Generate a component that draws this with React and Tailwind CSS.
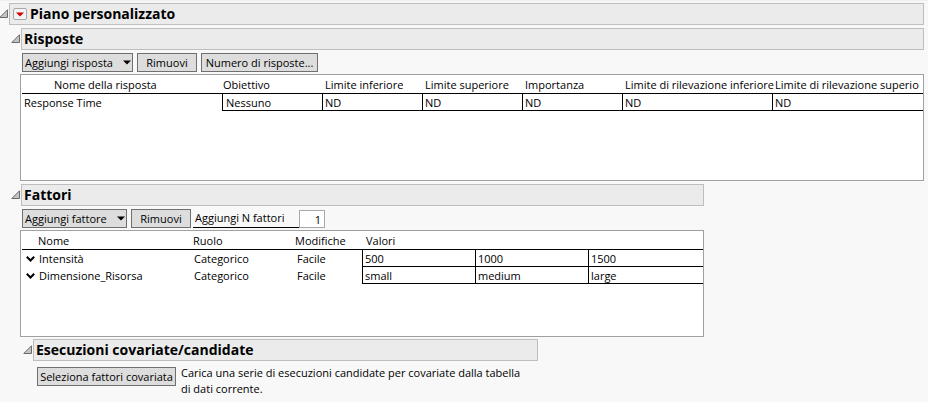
import React from "react";

const responseColumns = [
  { label: "Limite inferiore", width: "w-[100px]" },
  { label: "Limite superiore", width: "w-[100px]" },
  { label: "Importanza", width: "w-[100px]" },
  { label: "Limite di rilevazione inferiore", width: "w-[150px]" },
  { label: "Limite di rilevazione superio", width: "w-auto" },
];

const factors = [
  { name: "Intensità", role: "Categorico", changes: "Facile", values: ["500", "1000", "1500"] },
  { name: "Dimensione_Risorsa", role: "Categorico", changes: "Facile", values: ["small", "medium", "large"] },
];

function Disclosure({ label }) {
  return (
    <button type="button" aria-label={label} aria-expanded="true" className="flex w-3 shrink-0 items-center justify-end">
      <svg width="10" height="10" viewBox="0 0 10 10" aria-hidden="true">
        <path d="M8.5 0.8V8.5H0.8Z" fill="#c4c4c4" stroke="#6a6a6a" strokeWidth="1" />
      </svg>
    </button>
  );
}

function Outline({ title, level: Heading, menu, className }) {
  return (
    <div className={`flex h-[22px] ${className}`}>
      <Disclosure label={title} />
      <div className="flex min-w-0 grow items-center border border-[#bebebe] bg-[#ebebeb] pl-[2px]">
        {menu && (
          <button type="button" aria-label="Menu" className="mx-px mr-[3px] flex h-3 w-[14px] items-center justify-center rounded-[2px] border border-[#a8a8a8] bg-[#f3f3f3]">
            <svg width="8" height="5" viewBox="0 0 8 5" aria-hidden="true">
              <path d="M0 0.5H8L4 4.5Z" fill="#d00000" />
            </svg>
          </button>
        )}
        <Heading className="text-[14px] leading-5 font-bold whitespace-nowrap">{title}</Heading>
      </div>
    </div>
  );
}

function Button({ children, menu, className }) {
  return (
    <button
      type="button"
      aria-haspopup={menu ? "menu" : undefined}
      className={`flex h-[19px] shrink-0 items-center border border-[#6f6f6f] bg-[#dddddd] leading-4 whitespace-nowrap ${menu ? "justify-between pr-px pl-[2px]" : "justify-center"} ${className}`}
    >
      {children}
      {menu && (
        <svg width="8" height="5" viewBox="0 0 8 5" aria-hidden="true">
          <path d="M0 0.5H8L4 4.5Z" fill="#000" />
        </svg>
      )}
    </button>
  );
}

function ValueCell({ label, value }) {
  return (
    <td className="h-[17px] border-b border-l border-black p-0">
      <input aria-label={label} defaultValue={value} className="block h-4 w-full bg-transparent pt-px pl-[2px] leading-4 outline-none" />
    </td>
  );
}

const head = "h-[19px] border-b border-black p-0 pt-[2px] text-left align-middle font-normal whitespace-nowrap";

function Responses() {
  return (
    <div className="ml-3 h-[107px] overflow-hidden border border-[#a0a0a0] bg-white pl-px">
      <table className="w-full table-fixed border-separate border-spacing-0 leading-4">
        <thead>
          <tr>
            <th scope="col" className={`${head} w-[200px] pl-8`}>Nome della risposta</th>
            <th scope="col" className={`${head} w-[100px] pl-px`}>Obiettivo</th>
            {responseColumns.map((c) => (
              <th key={c.label} scope="col" className={`${head} ${c.width} pl-[3px]`}>{c.label}</th>
            ))}
          </tr>
        </thead>
        <tbody>
          <tr>
            <td className="p-0 pl-[2px]">Response Time</td>
            <td className="h-[17px] border-b border-l border-black p-0">
              <select aria-label="Obiettivo" className="block h-4 w-full appearance-none bg-transparent pt-px pl-[3px] leading-4 outline-none">
                <option>Nessuno</option>
              </select>
            </td>
            {responseColumns.map((c) => (
              <ValueCell key={c.label} label={c.label} value="ND" />
            ))}
          </tr>
        </tbody>
      </table>
    </div>
  );
}

function Factors() {
  return (
    <div className="ml-3 h-[107px] overflow-hidden border border-[#a0a0a0] bg-white pl-px">
      <table className="w-full table-fixed border-separate border-spacing-0 leading-4">
        <colgroup>
          <col className="w-[171px]" />
          <col className="w-[102px]" />
          <col className="w-[67px]" />
          <col className="w-[113px]" />
          <col className="w-[113px]" />
          <col />
        </colgroup>
        <thead>
          <tr>
            <th scope="col" className={`${head} pl-4`}>Nome</th>
            <th scope="col" className={head}>Ruolo</th>
            <th scope="col" className={head}>Modifiche</th>
            <th scope="col" colSpan={3} className={`${head} pl-1`}>Valori</th>
          </tr>
        </thead>
        <tbody>
          {factors.map((f) => (
            <tr key={f.name}>
              <td className="h-[17px] p-0 pl-1">
                <div className="flex h-4 items-center gap-1">
                  <button type="button" aria-label={`Espandi ${f.name}`}>
                    <svg width="9" height="6" viewBox="0 0 9 6" className="block" aria-hidden="true">
                      <path d="M0.8 0.8L4.5 4.5L8.2 0.8" fill="none" stroke="#000" strokeWidth="2" />
                    </svg>
                  </button>
                  {f.name}
                </div>
              </td>
              <td className="p-0 pl-px">{f.role}</td>
              <td className="p-0 pl-[2px]">{f.changes}</td>
              {f.values.map((v, i) => (
                <ValueCell key={v} label={`${f.name} ${i + 1}`} value={v} />
              ))}
            </tr>
          ))}
        </tbody>
      </table>
    </div>
  );
}

export default function App() {
  return (
    <main className="min-h-screen border-t border-[#f0f0f0] bg-[#f8f8f8] pt-[2px] pr-1 pb-3 font-['Open_Sans','Noto_Sans',sans-serif] text-[11px] leading-4 text-black">
      <Outline title="Piano personalizzato" level="h1" menu className="-ml-[3px]" />

      <div className="pl-2">
        <section className="pt-[3px]">
          <Outline title="Risposte" level="h2" className="ml-px" />
          <div className="flex gap-1 pt-[3px] pb-[2px] pl-[14px]">
            <Button menu className="w-[111px]">Aggiungi risposta</Button>
            <Button className="w-[60px]">Rimuovi</Button>
            <Button className="w-[117px]">Numero di risposte...</Button>
          </div>
          <Responses />
        </section>

        <section className="max-w-[696px] pt-[3px]">
          <Outline title="Fattori" level="h2" className="ml-px" />
          <div className="flex gap-[2px] pt-[3px] pb-[2px] pl-[14px]">
            <div className="flex gap-1">
              <Button menu className="w-[105px]">Aggiungi fattore</Button>
              <Button className="w-[60px]">Rimuovi</Button>
            </div>
            <div className="flex h-[19px] items-end">
              <label htmlFor="factor-count" className="flex h-[19px] w-[106px] items-center border-b border-black pl-[2px] whitespace-nowrap">
                Aggiungi N fattori
              </label>
              <input id="factor-count" defaultValue="1" className="h-[18px] w-[26px] border border-[#a8a8a8] bg-white pr-[3px] text-right leading-4 outline-none" />
            </div>
          </div>
          <Factors />
        </section>

        <section className="max-w-[530px] pt-[2px] pl-3">
          <Outline title="Esecuzioni covariate/candidate" level="h2" className="ml-px" />
          <div className="flex items-start gap-[5px] pt-1 pl-[17px]">
            <div className="pt-[2px]">
              <Button className="w-[139px]">Seleziona fattori covariata</Button>
            </div>
            <p className="max-w-[346px]">
              Carica una serie di esecuzioni candidate per covariate dalla tabella di dati corrente.
            </p>
          </div>
        </section>
      </div>
    </main>
  );
}
